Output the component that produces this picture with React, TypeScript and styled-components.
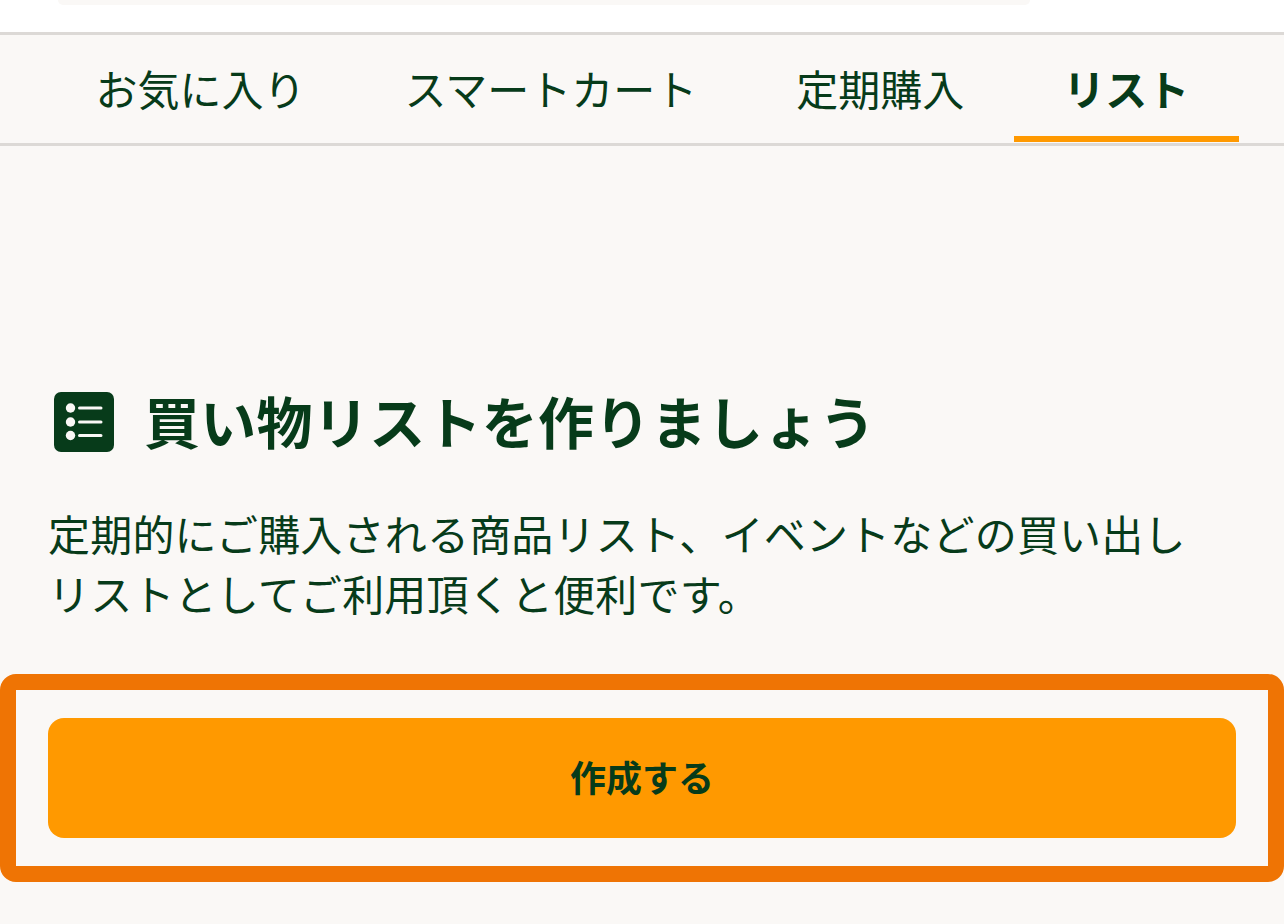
import React, { FC } from 'react'
import styled, { createGlobalStyle } from 'styled-components'

const TABS = ['お気に入り', 'スマートカート', '定期購入', 'リスト']
const ACTIVE_TAB = 'リスト'

const GlobalStyle = createGlobalStyle`
  html, body {
    margin: 0;
    padding: 0;
    background: #faf8f6;
  }
  body {
    color: #073b1a;
    font-family: 'Noto Sans CJK JP', 'Noto Sans', sans-serif;
    overflow: hidden;
  }
  * {
    box-sizing: border-box;
  }
`

const Page = styled.div`
  width: 1284px;
  height: 924px;
  display: flex;
  flex-direction: column;
`
const TopStrip = styled.div`
  height: 32px;
  flex: none;
  background: #fff;
  padding: 0 254px 0 58px;
`
const SearchEdge = styled.div`
  height: 5px;
  background: #faf8f6;
  border-radius: 0 0 24px 24px;
`
const TabBar = styled.nav`
  height: 114px;
  flex: none;
  display: flex;
  padding-left: 46px;
  border-top: 3px solid #dcd9d6;
  border-bottom: 3px solid #dcd9d6;
`
const Tab = styled.div<{ $active?: boolean }>`
  height: 107px;
  padding: 5px 49.5px 0;
  display: flex;
  align-items: center;
  font-size: 42px;
  line-height: 1;
  font-weight: ${(p) => (p.$active ? 700 : 400)};
  border-bottom: 6px solid ${(p) => (p.$active ? '#ff9900' : 'transparent')};
`
const Intro = styled.section`
  padding: 246px 48px 0;
  height: 528px;
  flex: none;
`
const Heading = styled.h2`
  margin: 0;
  padding-left: 6px;
  display: flex;
  align-items: center;
  column-gap: 30px;
  height: 60px;
  font-size: 56px;
  line-height: 60px;
  letter-spacing: 0.3px;
  font-weight: 700;
  white-space: nowrap;
`
const HeadingText = styled.span`
  padding-bottom: 4px;
`
const Description = styled.p`
  margin: 51px 0 0;
  font-size: 42px;
  line-height: 60px;
  letter-spacing: 0.2px;
  font-weight: 400;
  white-space: nowrap;
`
const Callout = styled.div`
  height: 208px;
  flex: none;
  padding: 28px 32px;
  border: 16px solid #ef7404;
  border-radius: 16px;
`
const CreateButton = styled.button`
  display: block;
  width: 100%;
  height: 120px;
  padding: 0 0 5px;
  border: none;
  border-radius: 16px;
  background: #ff9900;
  color: #073b1a;
  font-family: inherit;
  font-size: 36px;
  font-weight: 700;
`

const ListIcon: FC = () => (
  <svg width="60" height="60" viewBox="0 0 60 60" style={{ flex: 'none' }}>
    <rect width="60" height="60" rx="7" fill="#073b1a" />
    <circle cx="16.5" cy="16" r="4.7" fill="#faf8f6" />
    <circle cx="16.5" cy="30" r="4.7" fill="#faf8f6" />
    <circle cx="16.5" cy="43.5" r="4.7" fill="#faf8f6" />
    <path
      d="M25.5 16H47M25.5 30H47M25.5 43.5H47"
      stroke="#faf8f6"
      strokeWidth="3"
      strokeLinecap="round"
    />
  </svg>
)

const App: FC = () => {
  return (
    <Page>
      <GlobalStyle />
      <TopStrip>
        <SearchEdge />
      </TopStrip>
      <TabBar>
        {TABS.map((tab) => (
          <Tab key={tab} $active={tab === ACTIVE_TAB}>
            {tab}
          </Tab>
        ))}
      </TabBar>
      <Intro>
        <Heading>
          <ListIcon />
          <HeadingText>買い物リストを作りましょう</HeadingText>
        </Heading>
        <Description>
          定期的にご購入される商品リスト、イベントなどの買い出し
          <br />
          リストとしてご利用頂くと便利です。
        </Description>
      </Intro>
      <Callout>
        <CreateButton>作成する</CreateButton>
      </Callout>
    </Page>
  )
}

export default App
